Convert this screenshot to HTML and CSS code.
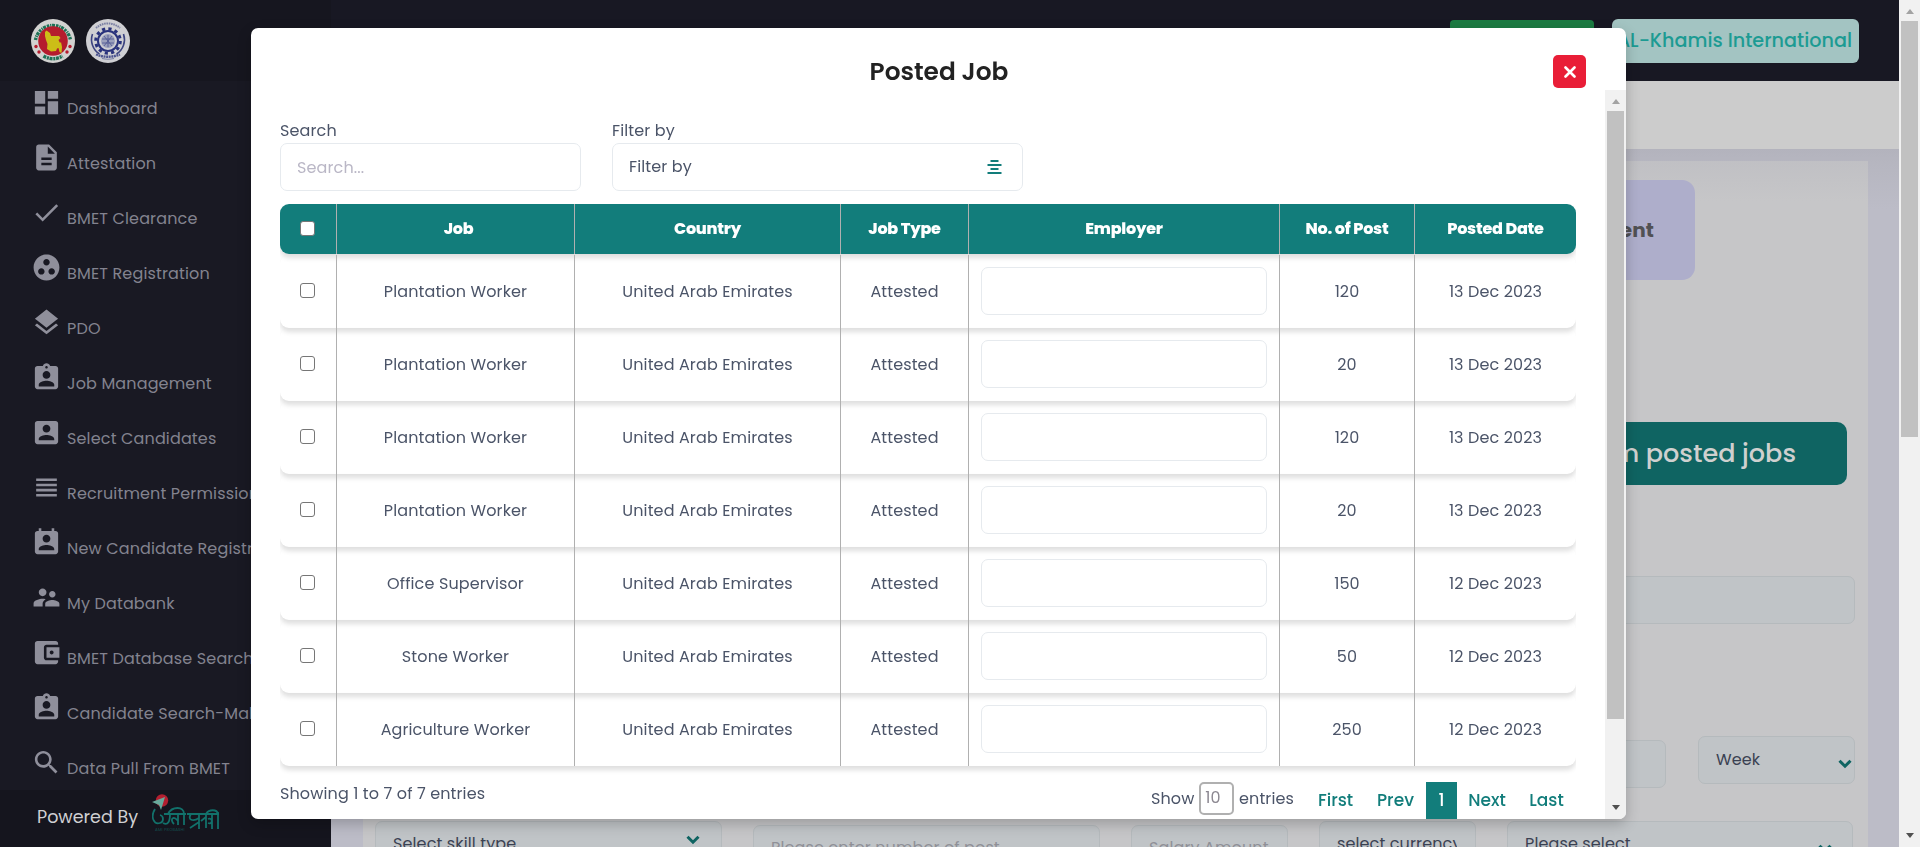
FILE: index.html
```html
<!DOCTYPE html>
<html lang="en">
<head>
<meta charset="utf-8">
<title>Posted Job</title>
<link rel="stylesheet" href="styles.css">
</head>
<body>
<svg class="defs" width="0" height="0">
  <symbol id="assign" viewBox="0 0 24 24"><path d="M19 3h-4.180C14.400 1.840 13.300 1 12 1c-1.300 0-2.400.84-2.820 2H5c-1.100 0-2 .9-2 2v14c0 1.100.9 2 2 2h14c1.100 0 2-.9 2-2V5c0-1.100-.9-2-2-2zm-7 0c.55 0 1 .45 1 1s-.45 1-1 1-1-.45-1-1 .45-1 1-1zm0 4c1.660 0 3 1.340 3 3s-1.340 3-3 3-3-1.340-3-3 1.340-3 3-3zm6 12H6v-1.400c0-2 4-3.100 6-3.100s6 1.100 6 3.100V19z"/></symbol>
  <symbol id="chev" viewBox="0 0 14 10"><path d="M1.500 1.800 7 7.200l5.500-5.400" fill="none" stroke="#0f6462" stroke-width="3"/></symbol>
</svg>
<div class="app">
  <aside class="sidebar">
    <div class="brand">
      <svg width="44" height="44" viewBox="0 0 44 44"><circle cx="22" cy="22" r="22" fill="#d2d2d0"/><path d="M4.500 21a17.800 17.800 0 0 1 35 0" fill="none" stroke="#1d7256" stroke-width="3.400" stroke-dasharray="2.400 .9 1.200 .7 3 1"/><path d="M12.500 37a17.800 17.800 0 0 0 19 0" fill="none" stroke="#1d7256" stroke-width="3.400" stroke-dasharray="3 .8 2 .7"/><circle cx="22" cy="22" r="14.800" fill="#b51c2d"/><path d="M14 13l1.500-1.500L19 14l1 3h8l1.500 2-2 2 1.500 3 1-1 1 5-.5 6-2-1-1-4-1.500.5L25 32l-5 .5-4-2.500.5-5-1.500-4-1-4z" fill="#ccbd17"/><g fill="#b51c2d"><circle cx="5" cy="27.500" r="1.700"/><circle cx="8" cy="33" r="1.700"/><circle cx="39" cy="27.500" r="1.700"/><circle cx="36" cy="33" r="1.700"/></g></svg>
      <svg width="44" height="44" viewBox="0 0 44 44"><circle cx="22" cy="22" r="22" fill="#cfcfd3"/><path d="M10 9a18 18 0 0 1 24 0" fill="none" stroke="#7b80a4" stroke-width="2" stroke-dasharray="1.600 .7"/><path d="M6.500 15a17 17 0 0 0 7 20M37.500 15a17 17 0 0 1-7 20" fill="none" stroke="#3d4480" stroke-width="1.600"/><circle cx="22" cy="22" r="12.300" fill="none" stroke="#29327c" stroke-width="3" stroke-dasharray="3.200 3.240"/><circle cx="22" cy="22" r="10" fill="none" stroke="#29327c" stroke-width="2"/><circle cx="22" cy="22" r="7" fill="#9a9fbc"/><path d="M16 20h12M16 24h12M22 16v12M18 17l8 10M26 17l-8 10" stroke="#4c5490" stroke-width=".8"/><path d="M10 35.500q12 4.500 24 0" fill="none" stroke="#4c5490" stroke-width="2.400" stroke-dasharray="2 .6"/><path d="M16 39.500q6 1.500 12 0" fill="none" stroke="#7b80a4" stroke-width="1.200"/></svg>
    </div>
    <nav class="menu">
      <div class="item"><svg viewBox="0 0 24 24"><path d="M3 13h8V3H3v10zm0 8h8v-6H3v6zm10 0h8V11h-8v10zm0-18v6h8V3h-8z"/></svg><span>Dashboard</span></div>
      <div class="item"><svg viewBox="0 0 24 24"><path d="M14 2H6c-1.100 0-1.990.9-1.990 2L4 20c0 1.100.89 2 1.990 2H18c1.100 0 2-.9 2-2V8l-6-6zm2 16H8v-2h8v2zm0-4H8v-2h8v2zm-3-5V3.500L18.500 9H13z"/></svg><span>Attestation</span></div>
      <div class="item"><svg viewBox="0 0 24 24"><path d="M9 16.170 4.830 12l-1.420 1.410L9 19 21 7l-1.410-1.410z"/></svg><span>BMET Clearance</span></div>
      <div class="item"><svg viewBox="0 0 24 24"><path d="M12 2C6.480 2 2 6.480 2 12s4.480 10 10 10 10-4.480 10-10S17.520 2 12 2zM8 17.500c-1.380 0-2.500-1.120-2.500-2.500s1.120-2.500 2.500-2.500 2.500 1.120 2.500 2.500-1.120 2.500-2.500 2.500zM9.500 8c0-1.380 1.120-2.500 2.500-2.500s2.500 1.120 2.500 2.500-1.120 2.500-2.500 2.500S9.500 9.380 9.500 8zm6.500 9.500c-1.380 0-2.500-1.120-2.500-2.500s1.120-2.500 2.500-2.500 2.500 1.120 2.500 2.500-1.120 2.500-2.500 2.500z"/></svg><span>BMET Registration</span></div>
      <div class="item"><svg viewBox="0 0 24 24"><path d="M11.990 18.540l-7.370-5.730L3 14.070l9 7 9-7-1.630-1.270-7.380 5.740zM12 16l7.360-5.730L21 9l-9-7-9 7 1.630 1.270L12 16z"/></svg><span>PDO</span></div>
      <div class="item"><svg><use href="#assign"/></svg><span>Job Management</span></div>
      <div class="item"><svg viewBox="0 0 24 24"><path d="M3 5v14c0 1.100.89 2 2 2h14c1.100 0 2-.9 2-2V5c0-1.100-.9-2-2-2H5c-1.110 0-2 .9-2 2zm12 4c0 1.660-1.340 3-3 3s-3-1.340-3-3 1.340-3 3-3 3 1.340 3 3zm-9 8c0-2 4-3.100 6-3.100s6 1.100 6 3.100v1H6v-1z"/></svg><span>Select Candidates</span></div>
      <div class="item"><svg viewBox="0 0 24 24"><path d="M4 15h16v-2H4v2zm0 4h16v-2H4v2zm0-8h16V9H4v2zm0-6v2h16V5H4z"/></svg><span>Recruitment Permission</span></div>
      <div class="item"><svg viewBox="0 0 24 24"><path d="M19 3h-1V1h-2v2H8V1H6v2H5c-1.110 0-2 .9-2 2v14c0 1.100.89 2 2 2h14c1.100 0 2-.9 2-2V5c0-1.100-.9-2-2-2zm-7 3c1.660 0 3 1.340 3 3s-1.340 3-3 3-3-1.340-3-3 1.340-3 3-3zm6 12H6v-1c0-2 4-3.100 6-3.100s6 1.100 6 3.100v1z"/></svg><span>New Candidate Registration</span></div>
      <div class="item"><svg viewBox="0 0 24 24"><path d="M16.500 12c1.380 0 2.490-1.120 2.490-2.500S17.880 7 16.500 7 14 8.120 14 9.500s1.120 2.500 2.500 2.500zM9 11c1.660 0 2.990-1.340 2.990-3S10.660 5 9 5 6 6.340 6 8s1.340 3 3 3zm7.500 3c-1.830 0-5.500.92-5.500 2.750V19h11v-2.250c0-1.830-3.670-2.750-5.500-2.750zM9 13c-2.330 0-7 1.170-7 3.500V19h7v-2.250c0-.85.33-2.340 2.370-3.470C10.500 13.100 9.660 13 9 13z"/></svg><span>My Databank</span></div>
      <div class="item"><svg viewBox="0 0 24 24"><path d="M21 18v1c0 1.100-.9 2-2 2H5c-1.110 0-2-.9-2-2V5c0-1.100.89-2 2-2h14c1.100 0 2 .9 2 2v1h-9c-1.110 0-2 .9-2 2v8c0 1.100.89 2 2 2h9zm-9-2h10V8H12v8zm4-2.500c-.83 0-1.500-.67-1.500-1.500s.67-1.500 1.500-1.500 1.500.67 1.500 1.500-.67 1.500-1.500 1.500z"/></svg><span>BMET Database Search</span></div>
      <div class="item"><svg><use href="#assign"/></svg><span>Candidate Search-Male</span></div>
      <div class="item"><svg viewBox="0 0 24 24"><path d="M15.500 14h-.79l-.28-.27C15.410 12.590 16 11.110 16 9.500 16 5.910 13.090 3 9.500 3S3 5.910 3 9.500 5.910 16 9.500 16c1.610 0 3.090-.59 4.230-1.570l.27.28v.79l5 4.990L20.490 19l-4.990-5zm-6 0C7.010 14 5 11.990 5 9.500S7.010 5 9.500 5 14 7.010 14 9.500 11.990 14 9.500 14z"/></svg><span>Data Pull From BMET</span></div>
    </nav>
    <div class="powered">
      <span>Powered By</span>
      <svg width="68" height="38" viewBox="0 0 68 38"><circle cx="10" cy="6.500" r="6.200" fill="#b31f30"/><path d="M0 8l13-5-4 13-2-5z" fill="#68aa9c"/><g fill="none" stroke="#12716b" stroke-width="1.800"><path d="M3 15c-5 8-1 16 5 14 4-1 4-7 0-8M11 29c5 3 7-2 7-9V20M12 20h22M26 20v11M22 30c-5-5 0-9 4-3M16 20c4-8 16-8 16 0v11M35 20h32M47 20v15M39 20c-4 6 2 8 8 4M38 34l9-6M54 20v14M49 27l5-4M60 20v15M56 25c5-2 5 6 0 4M66 18v17M54 20c3-5 11-5 12 0"/></g><text x="3" y="37" class="logo-sub">AMI PROBASHI</text></svg>
    </div>
  </aside>

  <main class="main">
    <header class="topbar"><div class="pill-green"></div><div class="account">AL-Khamis International</div></header>
    <div class="crumbs"></div>
    <div class="content">
      <section class="card">
        <div class="stage">Recruitment</div>
        <div class="posted-btn">Select from posted jobs</div>
        <div class="field wide"></div>
        <div class="row r2">
          <div class="field num"></div>
          <div class="field week"><span>Week</span><svg><use href="#chev"/></svg></div>
        </div>
        <div class="row r3">
          <div class="field f1"><span>Select skill type</span><svg><use href="#chev"/></svg></div>
          <div class="stack"><label>No. of people (as per demand letter)</label><div class="field f2 ph">Please enter number of post</div></div>
          <div class="field f3 ph">Salary Amount</div>
          <div class="field f4"><span>select currency</span></div>
          <div class="field f5"><span>Please select</span><svg><use href="#chev"/></svg></div>
        </div>
      </section>
    </div>
  </main>
  <div class="scroll page-scroll"><i class="up"></i><b></b><i class="down"></i></div>
</div>

<div class="modal">
  <header class="modal-head"><h2>Posted Job</h2><button class="close"><svg width="12" height="12" viewBox="0 0 12 12"><path d="M1.500 1.500l9 9M10.500 1.500l-9 9" stroke="#fff" stroke-width="2.600" stroke-linecap="round"/></svg></button></header>
  <div class="modal-body">
    <div class="pane">
      <div class="filters">
        <div class="search"><label>Search</label><div class="box muted">Search...</div></div>
        <div class="filter"><label>Filter by</label><div class="box"><span>Filter by</span><svg width="15" height="14" viewBox="0 0 15 14"><path d="M3.500 1h8M0.500 5h14M3.500 9h8M0.500 13h14" stroke="#127d7b" stroke-width="1.800"/></svg></div></div>
      </div>
      <div class="table">
        <div class="tr th"><div><input type="checkbox"></div><div class="job">Job</div><div>Country</div><div>Job Type</div><div>Employer</div><div>No. of Post</div><div>Posted Date</div></div>
        <div class="tr"><div><input type="checkbox"></div><div>Plantation Worker</div><div>United Arab Emirates</div><div>Attested</div><div><span class="emp"></span></div><div>120</div><div>13 Dec 2023</div></div>
        <div class="tr"><div><input type="checkbox"></div><div>Plantation Worker</div><div>United Arab Emirates</div><div>Attested</div><div><span class="emp"></span></div><div>20</div><div>13 Dec 2023</div></div>
        <div class="tr"><div><input type="checkbox"></div><div>Plantation Worker</div><div>United Arab Emirates</div><div>Attested</div><div><span class="emp"></span></div><div>120</div><div>13 Dec 2023</div></div>
        <div class="tr"><div><input type="checkbox"></div><div>Plantation Worker</div><div>United Arab Emirates</div><div>Attested</div><div><span class="emp"></span></div><div>20</div><div>13 Dec 2023</div></div>
        <div class="tr"><div><input type="checkbox"></div><div>Office Supervisor</div><div>United Arab Emirates</div><div>Attested</div><div><span class="emp"></span></div><div>150</div><div>12 Dec 2023</div></div>
        <div class="tr"><div><input type="checkbox"></div><div>Stone Worker</div><div>United Arab Emirates</div><div>Attested</div><div><span class="emp"></span></div><div>50</div><div>12 Dec 2023</div></div>
        <div class="tr"><div><input type="checkbox"></div><div>Agriculture Worker</div><div>United Arab Emirates</div><div>Attested</div><div><span class="emp"></span></div><div>250</div><div>12 Dec 2023</div></div>
      </div>
      <footer class="foot">
        <div class="count">Showing 1 to 7 of 7 entries</div>
        <div class="show"><span>Show</span><span class="per">10</span><span>entries</span></div>
        <div class="pager"><a class="p1">First</a><a class="p2">Prev</a><a class="on">1</a><a class="p3">Next</a><a class="p4">Last</a></div>
      </footer>
    </div>
    <div class="scroll modal-scroll"><i class="up"></i><b></b><i class="down"></i></div>
  </div>
</div>
</body>
</html>
```
FILE: styles.css
```css
* { box-sizing: border-box; }
body {
  margin: 0;
  height: 847px;
  overflow: hidden;
  font-family: Poppins, Inter, "Liberation Sans", sans-serif;
  font-size: 16px;
  line-height: 24px;
  letter-spacing: .12px;
  color: #4b5468;
}
.defs { position: absolute; }
.app { display: flex; height: 847px; overflow: hidden; }

/* sidebar */
.sidebar { width: 331px; flex: none; display: flex; flex-direction: column; background: #191923; }
.brand { height: 81px; flex: none; background: #16161f; padding: 19px 0 0 31px; display: flex; gap: 11px; align-items: flex-start; }
.menu { height: 709px; flex: none; overflow: hidden; padding-top: 5px; }
.item { height: 55px; display: flex; padding-left: 31px; white-space: nowrap; color: #83838f; letter-spacing: .15px; }
.item svg { width: 31px; height: 31px; margin: 1px 5px 0 0; flex: none; fill: #8f8f9b; }
.item span { margin-top: 11px; }
.powered { flex: 1; background: #15151e; display: flex; padding-left: 37px; color: #d0d0d3; font-size: 17.500px; }
.powered span { width: 115px; margin-top: 15px; letter-spacing: 0; }
.powered svg { margin-top: 4px; }
.logo-sub { font-size: 4px; fill: #14504e; letter-spacing: .2px; }

/* page behind the dialog */
.main { width: 1568px; flex: none; display: flex; flex-direction: column; background: #bcbcc6; }
.topbar { height: 81px; flex: none; background: #181823; display: flex; justify-content: flex-end; align-items: flex-start; gap: 18px; padding: 19px 40px 0 0; }
.pill-green { width: 144px; height: 40px; margin-top: 1px; border-radius: 4px; background: #1c7b42; }
.account { width: 247px; height: 44px; display: flex; justify-content: flex-end; padding-right: 7px; border-radius: 6px; background: #a3c4c2; color: #1c9b93; font-size: 19.200px; font-weight: 500; letter-spacing: 0; line-height: 43px; white-space: nowrap; }
.crumbs { height: 68px; flex: none; background: #ccc; }
.content { flex: 1; padding: 12px 31px 0 32px; background: linear-gradient(#b3b3bd 0, #b6b6c0 14px, #bcbcc7 60px); }
.card { height: 686px; display: flex; flex-direction: column; align-items: flex-end; padding: 19px 13px 0 12px; background: linear-gradient(#c0c0c4, #c6c6c8 40px); }
.card > * { flex: none; }
.stage { width: 330px; height: 100px; margin-right: 160px; padding-right: 41px; text-align: right; border-radius: 13px; background: #aeaecb; color: #515154; font-size: 20px; font-weight: 700; line-height: 100px; }
.posted-btn { width: 440px; height: 63px; margin: 142px 8px 0 0; padding-right: 51px; text-align: right; border-radius: 10px; background: #0f6462; color: #cfd0cf; font-size: 25.500px; letter-spacing: 0; font-weight: 500; line-height: 63px; }
.field { height: 48px; flex: none; border: 1px solid #b5babd; border-radius: 7px; background: #c0c4c7; color: #3a4152; line-height: 44px; padding: 0 18px 0 17px; display: flex; justify-content: space-between; overflow: hidden; white-space: nowrap; }
.field svg { width: 14px; height: 10px; flex: none; margin-top: 13px; }
.ph { color: #8f9097; }
.wide { width: 1480px; margin-top: 91px; }
.row { display: flex; align-items: flex-start; width: 100%; }
.r2 { justify-content: flex-end; margin-top: 112px; gap: 32px; }
.num { width: 346px; margin-top: 4px; }
.week { width: 157px; padding-right: 2px; line-height: 45px; }
.week svg { margin-top: 22px; }
.r3 { margin-top: 33px; gap: 31px; }
.f1 { width: 347px; padding-right: 21px; }
.stack { width: 347px; height: 52px; margin-top: -23px; }
.stack label { display: block; color: #3a4152; height: 27px; white-space: nowrap; padding-left: 1px; }
.f3 { width: 157px; margin-top: 4px; padding-right: 0; }
.f4 { width: 157px; padding-right: 18px; }
.f4 span { overflow: hidden; }
.f5 { width: 346px; padding-right: 20px; }
.f5 svg { margin-top: 22px; }

/* scrollbars */
.scroll { width: 21px; flex: none; background: #f1f1f1; display: flex; flex-direction: column; align-items: center; }
.scroll b { width: 17px; background: #c1c1c1; }
.scroll i { width: 0; height: 0; border: 4.500px solid transparent; }
.scroll .up { border-bottom: 5px solid #a3a3a3; border-top: 0; margin: 9px 0 7px; }
.scroll .down { border-top: 5px solid #505050; border-bottom: 0; margin-top: auto; }
.page-scroll b { height: 416px; }
.page-scroll .down { margin-bottom: 9px; }
.modal-scroll b { height: 608px; }
.modal-scroll .down { margin-bottom: 9px; }

/* dialog */
.modal { position: fixed; left: 251px; top: 28px; width: 1375px; height: 791px; background: #fff; border-radius: 7px; box-shadow: 0 5px 14px rgba(0, 0, 0, .22); }
.modal-head { height: 62px; display: grid; grid-template-columns: 74px 1fr 33px; padding-right: 40px; }
.modal-head h2 { grid-column: 2; margin: 28px 0 0; text-align: center; font-size: 24.800px; line-height: 32px; font-weight: 600; color: #222; letter-spacing: 0; }
.close { width: 33px; height: 33px; margin-top: 27px; padding: 0; border: 0; border-radius: 5px; background: #e91e37; display: grid; place-items: center; }
.modal-body { display: flex; height: 729px; overflow: hidden; border-radius: 0 0 7px 7px; }
.pane { width: 1354px; padding: 28px 29px 0; }
.filters { display: flex; gap: 31px; }
.filters label { display: block; height: 25px; line-height: 25px; }
.search { width: 301px; }
.filter { width: 411px; }
.box { height: 48px; display: flex; justify-content: space-between; align-items: center; padding: 0 20px 1px 16px; border: 1px solid #e6eaee; border-radius: 7px; }
.muted { color: #bab7c6; padding: 1px 16px 0; }
.table { margin-top: 13px; padding-bottom: 12px; overflow: hidden; }
.tr { display: grid; grid-template-columns: 57px 238px 266px 128px 311px 135px 161px; height: 73px; border-radius: 9px; box-shadow: 0 4px 5px rgba(0, 0, 0, .13); }
.tr > div { display: flex; justify-content: center; align-items: center; border-right: 1px solid #b0b0b0; padding-top: 1px; }
.tr > div:last-child { border-right: 0; }
.tr.th { height: 50px; margin-bottom: 1px; background: #127d7b; color: #fff; font-weight: 800; letter-spacing: -.25px; }
.tr.th > div { padding-top: 0; padding-bottom: 1px; }
.th .job { padding-left: 6px; }
.emp { width: 286px; height: 48px; margin-top: -2px; border: 1px solid #e6eaee; border-radius: 7px; background: #fff; }
.tr input { appearance: none; width: 15px; height: 15px; margin: 0; border: 1px solid #767676; border-radius: 3px; background: #fff; }
.tr > div:first-child { padding: 0 2px 2px 0; }
.tr.th > div:first-child { padding: 0 2px 1px 0; }
.foot { display: flex; margin-top: 4px; }
.count { width: 871px; flex: none; line-height: 23px; }
.show { display: flex; flex: none; line-height: 33px; height: 33px; width: 143px; justify-content: space-between; }
.per { width: 35px; height: 33px; border: 2px solid #b0b0b0; border-radius: 5px; padding-left: 4px; line-height: 27px; color: #8b8790; }
.pager { display: flex; flex: none; font-weight: 500; font-size: 17px; letter-spacing: 0; color: #127d7b; line-height: 36px; }
.pager a { height: 40px; text-align: center; }
.p1 { width: 83px; }
.pager .p2 { width: 49px; text-align: left; }
.pager .on { width: 31px; background: #127d7b; color: #fff; }
.p3 { width: 60px; }
.p4 { width: 59px; }
```
